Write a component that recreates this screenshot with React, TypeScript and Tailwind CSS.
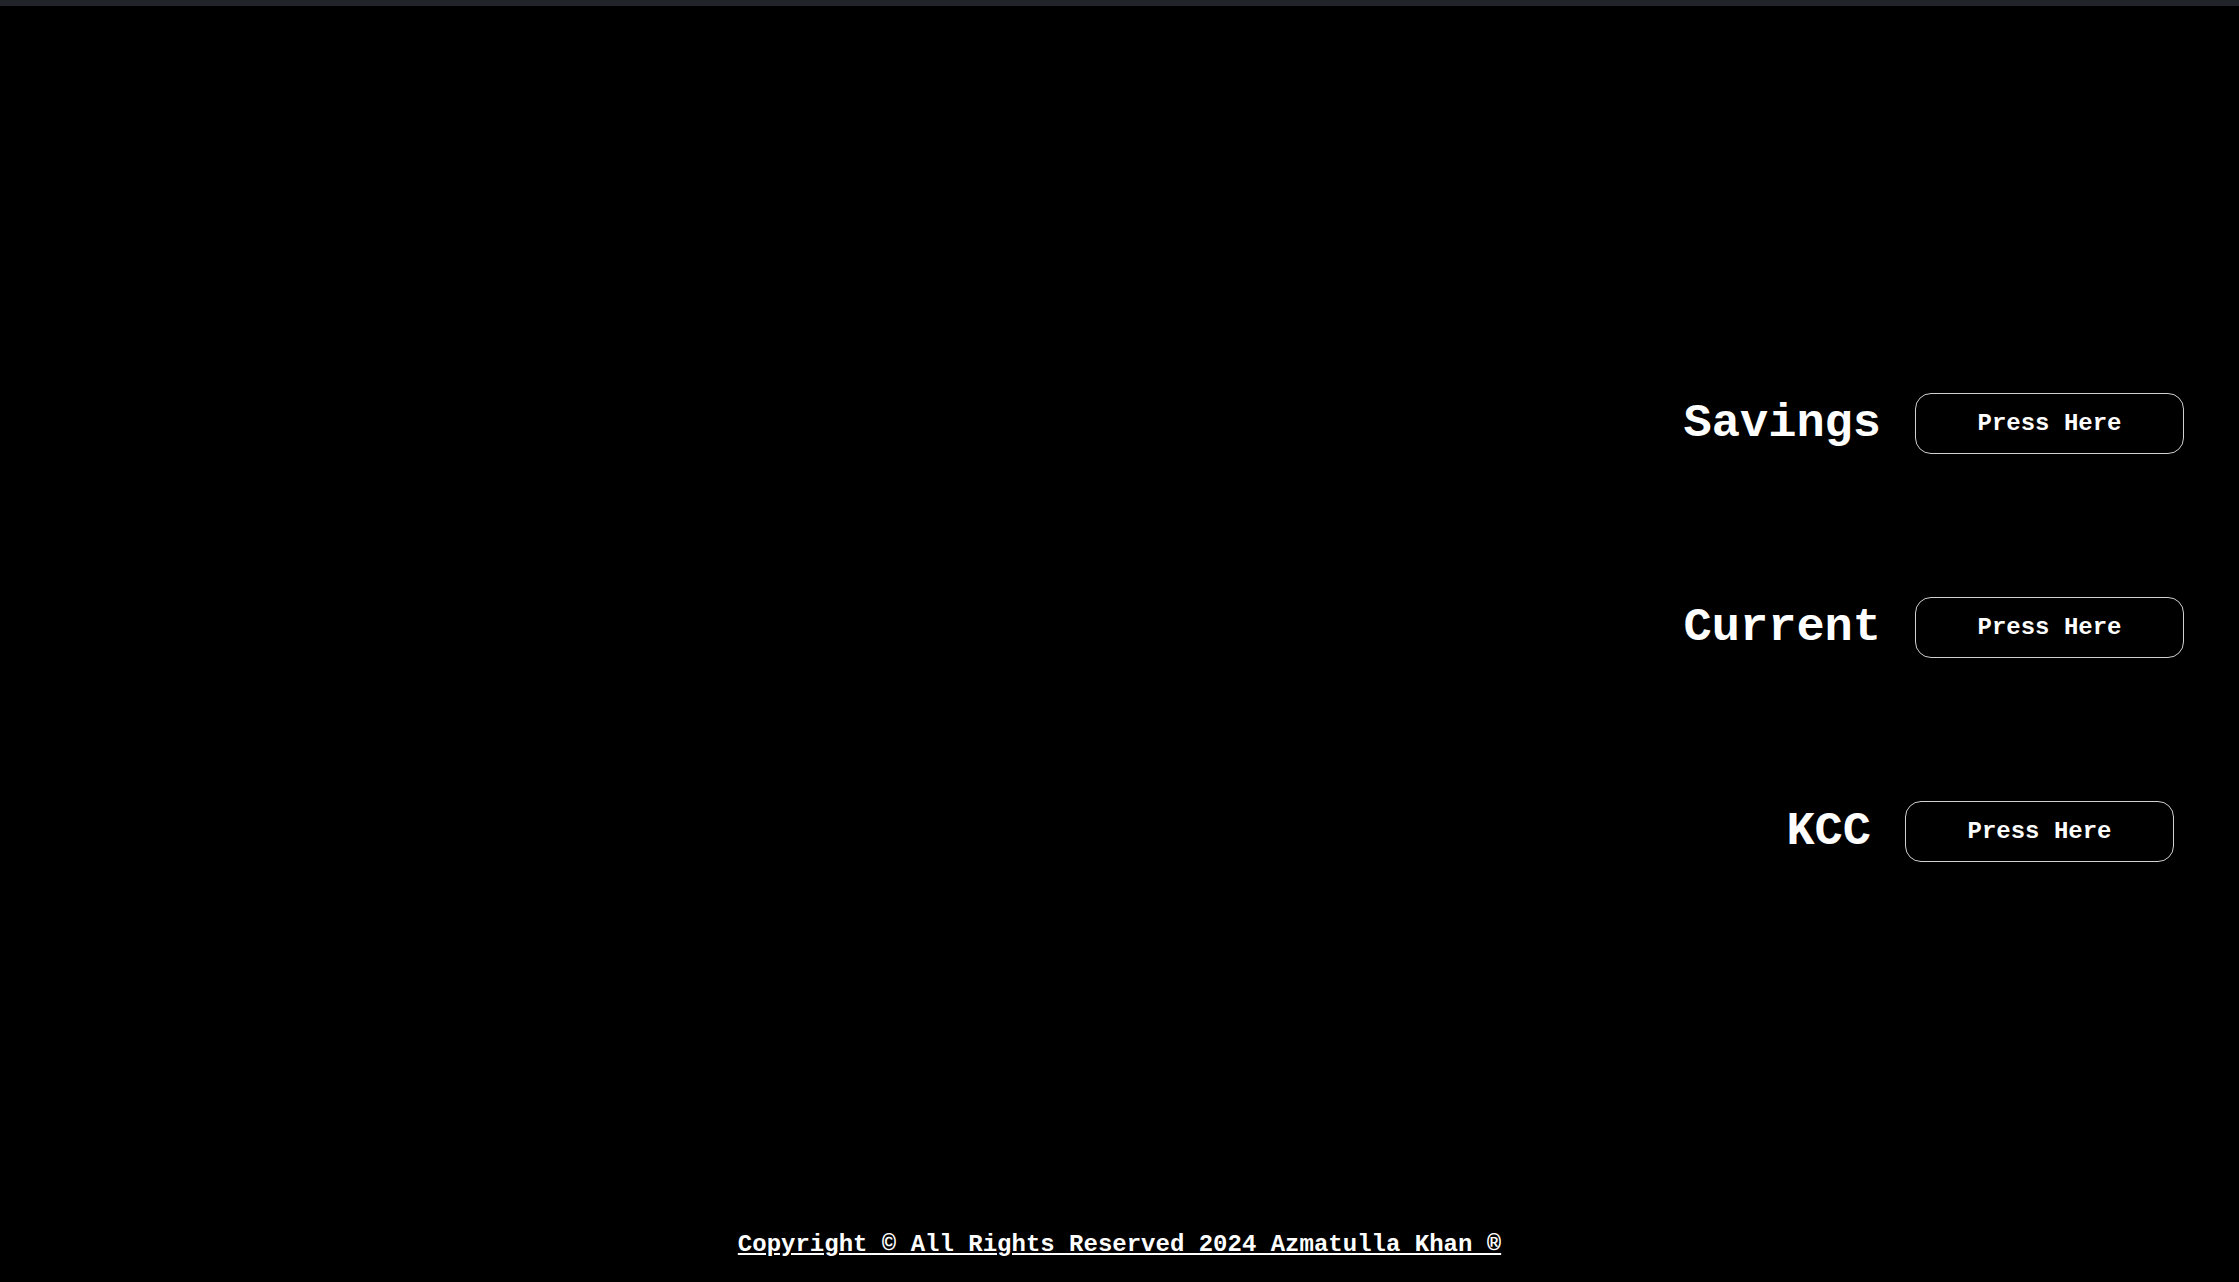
const rows = [
  { label: "Savings", shift: "" },
  { label: "Current", shift: "" },
  { label: "KCC", shift: "mr-[10px]" },
];

const AccountRow = ({ label, shift }: { label: string; shift: string }) => (
  <div className={`flex items-center justify-end gap-[34px] ${shift}`}>
    <span className="text-[47px] font-bold leading-none">{label}</span>
    <button className="h-[61px] w-[269px] rounded-[16px] border border-[#d0d0d0] text-[24px] font-bold">
      Press Here
    </button>
  </div>
);

export default function App() {
  return (
    <div className="flex h-screen flex-col bg-black font-['Courier_New','Liberation_Mono',monospace] text-white">
      <div className="h-[6px] bg-[#212529]" />

      <main className="flex flex-col gap-[143px] pr-[55px] pt-[387px]">
        {rows.map((r) => (
          <AccountRow key={r.label} label={r.label} shift={r.shift} />
        ))}
      </main>

      <footer className="mt-auto pb-[21px] text-center">
        <a href="#" className="text-[24px] font-bold leading-8 underline">
          Copyright © All Rights Reserved 2024 Azmatulla Khan ®
        </a>
      </footer>
    </div>
  );
}
